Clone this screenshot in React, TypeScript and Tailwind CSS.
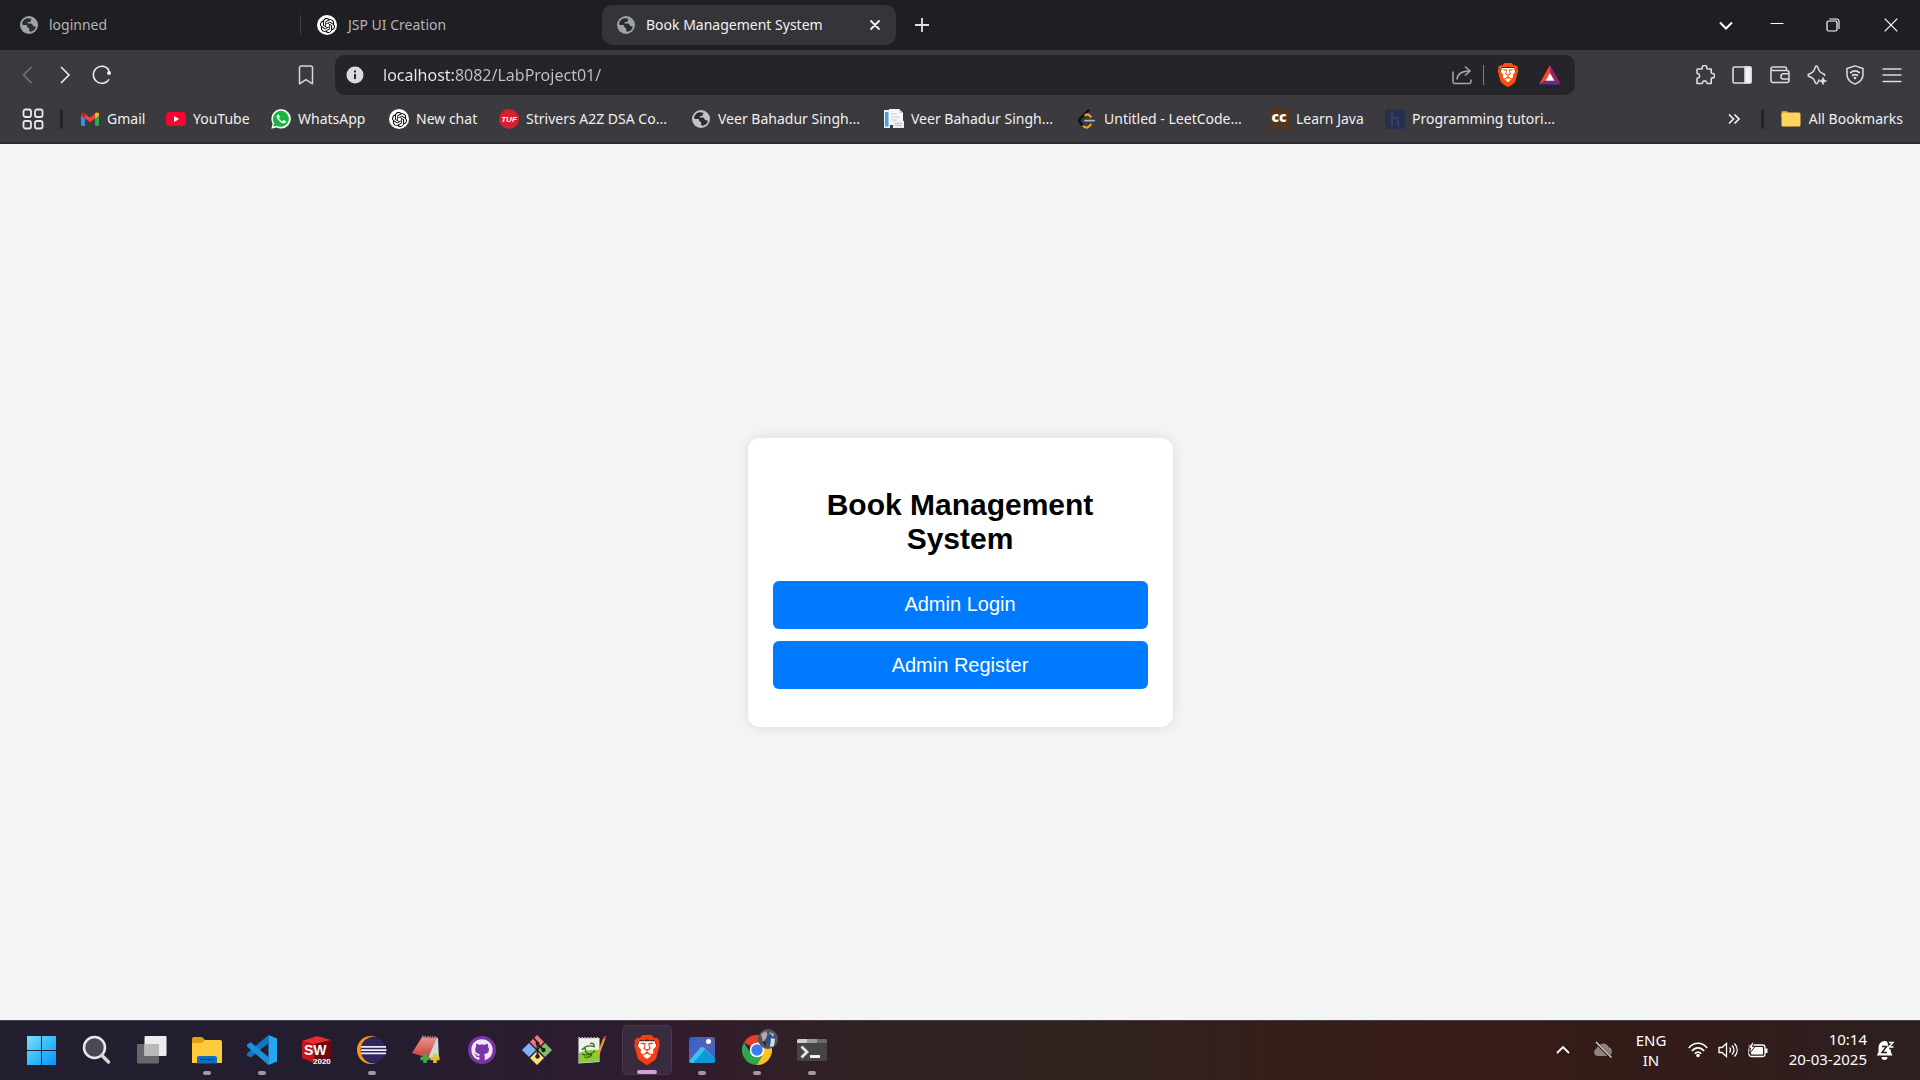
import React from "react";
import { SiOpenai, SiBrave } from "react-icons/si";
import { FaGithub } from "react-icons/fa6";

type IconProps = { className?: string };

const Globe = ({ className = "size-[18px] text-[#9da3a9]" }: IconProps) => (
  <svg viewBox="0 0 18 18" className={className} aria-hidden="true">
    <circle cx="9" cy="9" r="9" fill="currentColor" />
    <path
      d="M8.500 2.200C6.700 2 4 3 2.800 5.600c-.9 1.800-.9 3 .2 3.300l3.200.2c.8.1 1 .6 1 1.500 0 1 .5 1.200 1.500 1.300.6 0 .5.6.4 1.300-.1 1.300.5 2.600 1.700 2.500 1.900-.3 3.800-1.700 4.700-3.700.4-1.300-.2-1.700-1-1.700-1 0-1.500-.2-1.800-1.100-.3-1-1.100-1.600-2.200-1.600H8.300c-.9 0-1-.9-.4-1.300.5-.3 1.300-.3 1.900-.2.7.1.9-.5.7-1-.2-.6.3-1 .8-1.300.5-.4.3-.9-.3-1.100z"
      fill="#2b2b30"
    />
  </svg>
);

const OpenAi = () => (
  <span className="flex size-5 shrink-0 items-center justify-center rounded-full bg-white text-black">
    <SiOpenai className="size-[15px]" />
  </span>
);

const Lion = ({ className }: IconProps) => (
  <span className={className}>
    <svg viewBox="0 0 24 24" className="size-full" aria-hidden="true">
      <path d="M6 5h12l2 5-3 7-5 4-5-4-3-7z" fill="#fff" />
      <SiBrave size={24} />
    </svg>
  </span>
);

const Gmail = () => (
  <svg viewBox="0 0 20 20" className="size-5" aria-hidden="true">
    <path d="M1 5.500v10.500a1 1 0 0 0 1 1h3V9z" fill="#4285f4" />
    <path d="M19 5.500v10.500a1 1 0 0 1-1 1h-3V9z" fill="#34a853" />
    <path d="M5 9.500V4.700l5 3.800 5-3.800v4.800l-5 3.800z" fill="#ea4335" />
    <path d="M1 5.500C1 3.300 3.400 2.800 5 4.200v5.300L1 6.500z" fill="#c5221f" />
    <path d="M19 5.500c0-2.200-2.400-2.700-4-1.300v5.300l4-3z" fill="#fbbc04" />
  </svg>
);

const YouTube = () => (
  <svg viewBox="0 0 20 20" className="size-5" aria-hidden="true">
    <rect y="3" width="20" height="14" rx="3.500" fill="#ff0033" />
    <path d="M8 7l5.200 3L8 13z" fill="#fff" />
  </svg>
);

const WhatsApp = () => (
  <svg viewBox="0 0 20 20" className="size-5" aria-hidden="true">
    <path d="M.3 19.700l1.400-5A9.700 9.700 0 1 1 5.500 18.400z" fill="#fff" />
    <path d="M2.200 17.800l1-3.500a8 8 0 1 1 2.700 2.500z" fill="#15b83c" />
    <path
      d="M7.100 5.400c-.5 0-1.400.7-1.400 2 0 3 4.300 6.900 7 6.900 1.400 0 2.300-.9 2.300-1.900 0-.4-2.200-1.500-2.500-1.400-.5.200-.8 1.200-1.200 1.200-.8 0-3.300-2.200-3.300-3 0-.4.800-.8.8-1.300S7.900 5.400 7.500 5.400z"
      fill="#fff"
    />
  </svg>
);

const Tuf = () => (
  <svg viewBox="0 0 20 20" className="size-5" aria-hidden="true">
    <circle cx="10" cy="10" r="10" fill="#d4202f" />
    <text x="10" y="12.500" textAnchor="middle" className="fill-white font-['Liberation_Sans'] text-[8px] font-bold italic">
      TUF
    </text>
  </svg>
);

const Papers = () => (
  <svg viewBox="0 0 20 20" className="size-5" aria-hidden="true">
    <path d="M0 1h6v18H0z" fill="#eef1f4" />
    <path d="M1 3h3.500v14.500H1z" fill="#4f9fd6" />
    <path d="M5 0h10l4 4v12H5z" fill="#f6f7f8" />
    <path d="M15 0v4h4" fill="#cfd4d9" />
    <path d="M7 5h6M7 8h9M7 11h6" stroke="#c3cad3" />
    <path d="M9 12h11v7H9z" fill="#e9ecef" />
    <path d="M11 14.500h7M11 16.500h7" stroke="#bfc6ce" />
  </svg>
);

const LeetCode = () => (
  <svg viewBox="0 0 20 20" className="size-5" fill="none" strokeLinecap="round" strokeWidth="2.200" aria-hidden="true">
    <path d="M11.500 1.200L3.300 9.600c-1.400 1.500-1.400 2.600 0 4.100l3.200 3.700" stroke="#0b0b0b" />
    <path d="M6.500 17.200c1.800 1.700 4 1.600 5.600.1l1.600-1.700M8.500 6c1.400-1 2.800-.7 3.700.2l1.500 1.500" stroke="#f89f1b" />
    <path d="M8 11.700h9" stroke="#b3b3b3" strokeWidth="1.800" />
  </svg>
);

const CodeChef = () => (
  <span className="flex size-5 items-center justify-center bg-[#56351f] pb-1 font-['Open_Sans',sans-serif] text-[14px] leading-4 font-extrabold text-white">
    cc
  </span>
);

const Hyper = () => (
  <svg viewBox="0 0 20 20" className="size-5" aria-hidden="true">
    <rect width="20" height="20" rx="1.500" fill="#283052" />
    <path d="M7 3v14M7 10.500c1-2.500 6-2.800 6 .8V17" fill="none" stroke="#3a4060" strokeWidth="2.200" />
  </svg>
);

type Bookmark = { label: string; icon: React.ReactNode; width: string };

const bookmarks: Bookmark[] = [
  { label: "Gmail", icon: <Gmail />, width: "w-[86px]" },
  { label: "YouTube", icon: <YouTube />, width: "w-[105px]" },
  { label: "WhatsApp", icon: <WhatsApp />, width: "w-[118px]" },
  { label: "New chat", icon: <OpenAi />, width: "w-[110px]" },
  { label: "Strivers A2Z DSA Co...", icon: <Tuf />, width: "w-[192px]" },
  { label: "Veer Bahadur Singh...", icon: <Globe className="mx-px size-[18px] text-[#bfc4c8]" />, width: "w-[193px]" },
  { label: "Veer Bahadur Singh...", icon: <Papers />, width: "w-[193px]" },
  { label: "Untitled - LeetCode...", icon: <LeetCode />, width: "w-[192px]" },
  { label: "Learn Java", icon: <CodeChef />, width: "w-[116px]" },
  { label: "Programming tutori...", icon: <Hyper />, width: "w-[180px]" },
];

function TabStrip() {
  return (
    <header className="flex h-[50px] items-center bg-[#1f1e23] pr-[22px] text-[14px] text-[#b4b4b7]">
      <div role="tablist" aria-label="Open tabs" className="flex items-center">
        <button role="tab" aria-selected="false" className="flex h-10 w-[300px] items-center gap-[11px] pl-5">
          <Globe />
          <span className="pb-[2px]">loginned</span>
        </button>
        <span className="h-5 w-px bg-[#3f3e44]" />
        <button role="tab" aria-selected="false" className="flex h-10 w-[301px] items-center gap-[11px] pl-4">
          <OpenAi />
          <span className="pb-[2px]">JSP UI Creation</span>
        </button>
        <div className="flex h-10 w-[294px] items-center rounded-[10px] bg-[#353439] pr-[13px] pl-[15px] text-[#f1f1f3]">
          <button role="tab" aria-selected="true" className="flex grow items-center gap-[11px]">
            <Globe />
            <span className="pb-[2px]">Book Management System</span>
          </button>
          <button aria-label="Close tab" className="p-[3px]">
            <svg viewBox="0 0 10 10" className="size-[10px]" stroke="#f4f4f6" strokeWidth="1.800" strokeLinecap="round">
              <path d="M1 1l8 8M9 1l-8 8" />
            </svg>
          </button>
        </div>
      </div>
      <button aria-label="New tab" className="ml-[19px]">
        <svg viewBox="0 0 14 14" className="size-[14px]" stroke="#e3e3e6" strokeWidth="1.800">
          <path d="M7 0v14M0 7h14" />
        </svg>
      </button>
      <div className="ml-auto flex items-center">
        <button aria-label="Search tabs" className="mr-[37px]">
          <svg viewBox="0 0 14 14" className="size-[14px]" fill="none" stroke="#fff" strokeWidth="2">
            <path d="M1 4.500l6 6 6-6" />
          </svg>
        </button>
        <button aria-label="Minimize" className="mr-[42px]">
          <svg viewBox="0 0 14 14" className="size-[14px]" stroke="#fff" strokeWidth="1">
            <path d="M.5 5.500h13" />
          </svg>
        </button>
        <button aria-label="Restore" className="mr-[44px]">
          <svg viewBox="0 0 14 14" className="size-[14px]" fill="none" stroke="#fff">
            <rect x="1" y="3" width="10" height="10" rx="1.500" strokeWidth="1.200" />
            <path d="M3.500 1h7A2.500 2.500 0 0 1 13 3.500V11" strokeWidth="1.100" />
          </svg>
        </button>
        <button aria-label="Close window">
          <svg viewBox="0 0 14 14" className="size-[14px]" stroke="#fff" strokeWidth="1.200">
            <path d="M.7.7l12.600 12.600M13.300.7L.7 13.300" />
          </svg>
        </button>
      </div>
    </header>
  );
}

function AddressBar() {
  return (
    <div className="flex h-[50px] items-center bg-[#3b3a3e]">
      <div className="flex w-[335px] items-center pl-[17px]">
        <button aria-label="Back">
          <svg viewBox="0 0 20 20" className="size-5" fill="none" stroke="#77767b" strokeWidth="1.500">
            <path d="M14.500 2L6.500 10l8 8" />
          </svg>
        </button>
        <button aria-label="Forward" className="ml-[18px]">
          <svg viewBox="0 0 20 20" className="size-5" fill="none" stroke="#ededf0" strokeWidth="1.600">
            <path d="M6 2l8 8-8 8" />
          </svg>
        </button>
        <button aria-label="Reload" className="ml-[17px]">
          <svg viewBox="0 0 20 20" className="size-5" fill="none" stroke="#ededf0" strokeWidth="1.500">
            <path d="M16.500 4.500a8.500 8.500 0 1 0 .6 9.800" />
            <circle cx="17" cy="8" r="2" fill="#ededf0" stroke="none" />
            <path d="M16 4l1.500 3" />
          </svg>
        </button>
        <button aria-label="Bookmark this page" className="ml-auto mr-[19px]">
          <svg viewBox="0 0 20 20" className="size-5" fill="none" stroke="#d8d8dc" strokeWidth="1.500">
            <path d="M3.500 18.800V2.800A1.800 1.800 0 0 1 5.300 1h9.400a1.800 1.800 0 0 1 1.800 1.800v16L10 14.600z" strokeLinejoin="round" />
          </svg>
        </button>
      </div>
      <div className="flex h-10 grow items-center rounded-[10px] bg-[#252429] pr-[13px] pl-[11px]">
        <button aria-label="Site information">
          <svg viewBox="0 0 18 18" className="size-[18px]">
            <circle cx="9" cy="9" r="8.500" fill="#dcdbe1" />
            <path d="M9 8v5M9 4.500v2" stroke="#2a292e" strokeWidth="2" />
          </svg>
        </button>
        <input
          aria-label="Address"
          defaultValue="localhost:8082/LabProject01/"
          className="ml-[19px] h-10 min-w-0 grow bg-[linear-gradient(90deg,#ececef_71px,#c2c2c6_71px)] bg-clip-text text-[16px] text-transparent outline-none"
        />
        <button aria-label="Share">
          <svg viewBox="0 0 20 20" className="size-5" fill="none" stroke="#a9a8ad" strokeWidth="1.500">
            <path d="M1 6.500v10.300A1.700 1.700 0 0 0 2.700 18.500h14.600a1.700 1.700 0 0 0 1.700-1.700V14.500" />
            <path d="M5 14.500c.3-5 4-8.500 13-8.500M13 1.500L18 6l-5 4.500" />
          </svg>
        </button>
        <span className="ml-[11px] h-5 w-px bg-[#7d7c82]" />
        <button aria-label="Brave Shields" className="ml-[12px]">
          <Lion className="block size-6 text-[#fb4f0a]" />
        </button>
        <button aria-label="Brave Rewards" className="ml-[18px]">
          <svg viewBox="0 0 24 24" className="size-6">
            <path d="M12 2L1 21.500l6.500-3.700L12 10z" fill="#ff4724" />
            <path d="M12 2l11 19.500-6.500-3.700L12 10z" fill="#9e1f63" />
            <path d="M1 21.500h22l-6.500-3.700h-9z" fill="#662d91" />
            <path d="M12 10l4.500 7.800h-9z" fill="#fff" />
          </svg>
        </button>
      </div>
      <div className="flex w-[345px] justify-end pr-[18px]">
        <div className="flex w-[207px] items-center justify-between text-[#dddce1]">
          <button aria-label="Extensions">
            <svg viewBox="0 0 20 20" className="size-5" fill="none" stroke="currentColor" strokeWidth="1.600" strokeLinejoin="round">
              <path d="M2.500 4h4.200c.6 0 .5-.6.5-1.200a2.300 2.300 0 0 1 4.600 0c0 .6 0 1.200.6 1.200h3.800v3.600c0 .8.5.9 1.200.9a2.200 2.200 0 0 1 0 4.400c-.7 0-1.200.1-1.200.9v4.700h-3.600c-.7 0-.7-.6-.8-1.100a2.200 2.200 0 0 0-4.200 0c-.1.500-.1 1.100-.8 1.100H2v-4.700c0-.7.500-.7 1.100-.8a2.200 2.200 0 0 0 0-4.200c-.6-.1-1.100-.2-1.100-.9V4.500z" />
            </svg>
          </button>
          <button aria-label="Sidebar">
            <svg viewBox="0 0 20 20" className="size-5" fill="none" stroke="currentColor" strokeWidth="1.600">
              <rect x="1" y="2" width="18" height="16" rx="1.500" />
              <path d="M13 2h5a1 1 0 0 1 1 1v14a1 1 0 0 1-1 1h-5z" fill="#f4f4f6" />
            </svg>
          </button>
          <button aria-label="Wallet">
            <svg viewBox="0 0 20 20" className="size-5" fill="none" stroke="currentColor" strokeWidth="1.500">
              <path d="M16.500 5.500V4A1.800 1.800 0 0 0 14.700 2H3a2 2 0 0 0-2 2v11.500a2 2 0 0 0 2 2h14a2 2 0 0 0 2-2V7.500a2 2 0 0 0-2-2H3a2 2 0 0 1-2-1.800" />
              <path d="M19 8.800h-5.500a2.600 2.600 0 0 0 0 5.200H19" />
            </svg>
          </button>
          <button aria-label="Leo AI">
            <svg viewBox="0 0 20 20" className="size-5" fill="none" stroke="currentColor" strokeWidth="1.500" strokeLinejoin="round">
              <path d="M12.500 14.500c-1 .5-1.300 2-1.900 3.400-.5 1-1.700 1-2.200 0C7 14.500 6.600 13 1.800 11.200c-1-.4-1-1.600 0-2C6.600 7.400 7 6 8.500 1.800c.4-1 1.600-1 2 0C12 6 12.500 7.400 17 9.200c1 .4.800 1.300.3 1.800" />
              <path d="M16 12.500l1 2.500 2.500 1-2.500 1-1 2.500-1-2.500-2.500-1 2.500-1z" fill="currentColor" strokeWidth=".8" />
            </svg>
          </button>
          <button aria-label="VPN">
            <svg viewBox="0 0 20 20" className="size-5" fill="none" stroke="currentColor" strokeWidth="1.500" strokeLinejoin="round">
              <path d="M10 .9l8 2.600v6c0 4.600-3 7.600-8 9.600-5-2-8-5-8-9.600v-6z" />
              <path d="M5.200 8c3-2.600 6.600-2.600 9.600 0M7 10.800c2-1.600 4-1.600 6 0" strokeWidth="1.800" />
              <circle cx="10" cy="13" r="1.300" fill="currentColor" stroke="none" />
            </svg>
          </button>
          <button aria-label="Menu">
            <svg viewBox="0 0 20 20" className="size-5" stroke="currentColor" strokeWidth="1.600">
              <path d="M.5 4h19M.5 10h19M.5 16.500h19" />
            </svg>
          </button>
        </div>
      </div>
    </div>
  );
}

function BookmarkBar() {
  return (
    <nav
      aria-label="Bookmarks"
      className="flex h-[44px] items-center border-b-2 border-[#2c2b31] bg-[#3b3a3e] pr-[17px] pb-1 pl-[22px] text-[14px] text-[#f0f0f2]"
    >
      <button aria-label="Apps">
        <svg viewBox="0 0 22 22" className="size-[22px]" fill="none" stroke="#e8e8eb" strokeWidth="1.800">
          <rect x="1.500" y="1.500" width="7.500" height="7.500" rx="2" />
          <rect x="13" y="1.500" width="7.500" height="7.500" rx="2" />
          <rect x="1.500" y="13" width="7.500" height="7.500" rx="2" />
          <rect x="13" y="13" width="7.500" height="7.500" rx="2" />
        </svg>
      </button>
      <span className="mr-[17px] ml-4 h-5 w-[3px] rounded bg-[#242328]" />
      {bookmarks.map((b, i) => (
        <a key={i} href="#" className={`flex shrink-0 items-center gap-[7px] whitespace-nowrap ${b.width}`}>
          {b.icon}
          <span className="pb-[2px]">{b.label}</span>
        </a>
      ))}
      <div className="ml-auto flex items-center">
        <button aria-label="More bookmarks">
          <svg viewBox="0 0 12 12" className="size-3" fill="none" stroke="#f0f0f2" strokeWidth="1.700">
            <path d="M1 1.500L5.500 6 1 10.500M6.500 1.500L11 6l-4.500 4.500" />
          </svg>
        </button>
        <span className="mr-[17px] ml-[21px] h-5 w-[3px] rounded bg-[#242328]" />
        <a href="#" className="flex items-center gap-2 whitespace-nowrap">
          <svg viewBox="0 0 20 20" className="size-5" aria-hidden="true">
            <path d="M.5 3a1 1 0 0 1 1-1H6l2 2.500v4H.5z" fill="#d99a1c" />
            <rect x=".5" y="3.500" width="19" height="14" rx="1.500" fill="#ffd45c" />
          </svg>
          <span className="pb-[2px]">All Bookmarks</span>
        </a>
      </div>
    </nav>
  );
}

const icon30 = "size-[30px]";

const WindowsLogo = () => (
  <svg viewBox="1 0 30 30" className={icon30}>
    <defs>
      <linearGradient id="win" x1="0" y1="0" x2="30" y2="30" gradientUnits="userSpaceOnUse">
        <stop offset="0" stopColor="#86dcfb" />
        <stop offset=".5" stopColor="#35bdfb" />
        <stop offset="1" stopColor="#0a90f8" />
      </linearGradient>
    </defs>
    <path d="M0 1h14v14H0zM15 1h14v14H15zM0 16h14v14H0zM15 16h14v14H15z" fill="url(#win)" className="translate-x-px" />
  </svg>
);

const Search = () => (
  <svg viewBox="0 0 30 30" className={icon30} fill="none">
    <circle cx="12.500" cy="12.500" r="10.500" fill="#4b4754" stroke="#e8e8ea" strokeWidth="2.500" />
    <path d="M20 20.500l6.500 6.500" stroke="#d5d5da" strokeWidth="3.500" strokeLinecap="round" />
  </svg>
);

const TaskView = () => (
  <svg viewBox="0 0 30 30" className={icon30}>
    <rect y="9" width="22" height="19.500" rx="1" fill="#686868" />
    <rect x="7.500" y="1" width="22" height="20" rx="1" fill="#ececec" />
    <path d="M7.500 9H22v12H7.500z" fill="#b9b9b9" />
  </svg>
);

const Explorer = () => (
  <svg viewBox="0 0 30 30" className={icon30}>
    <path d="M0 4a2 2 0 0 1 2-2h8l3 3v4H0z" fill="#e0a10c" />
    <path d="M0 8h10l3-3h15a2 2 0 0 1 2 2v21H0z" fill="#ffcb3c" />
    <path d="M5 28.500V23a2 2 0 0 1 2-2h16a2 2 0 0 1 2 2v5.500z" fill="#0f6fc4" />
    <path d="M8 24.500h14" stroke="#093f7a" strokeWidth="1.200" />
  </svg>
);

const VsCode = () => (
  <svg viewBox="0 0 30 30" className={icon30}>
    <path d="M21.500 8L3.700 22.500 0 20.500v-2.200L21.500 0z" fill="#0d79c4" />
    <path d="M0 9.500l3.700-2.300L21.500 22v8L0 11.500z" fill="#1b8fdc" />
    <path d="M21.500 0L30 3.500v23L21.500 30z" fill="#27a7f2" />
  </svg>
);

const SolidWorks = () => (
  <svg viewBox="0 0 30 30" className={icon30}>
    <path d="M0 6l12 3v19L0 23z" fill="#c8151c" />
    <path d="M12 9l17-4v19l-17 4z" fill="#6c0b10" />
    <path d="M0 6l15-5 14 4-17 4z" fill="#ea2a2e" />
    <text x="2" y="20" className="fill-white font-['Liberation_Sans'] text-[14px] leading-[14px] font-bold">SW</text>
    <text x="11" y="29" className="fill-white font-['Liberation_Sans'] text-[8px] leading-[8px] font-bold">2020</text>
  </svg>
);

const Eclipse = () => (
  <svg viewBox="0 0 30 30" className={icon30}>
    <circle cx="14" cy="15" r="14" fill="#f7941e" />
    <circle cx="17" cy="15" r="13.300" fill="#221e33" />
    <circle cx="16.500" cy="15" r="12.500" fill="#2f2560" />
    <path d="M4 11h25v1.800H4zM4 14.200h25.500v1.800H4zM4 17.500h25v1.800H4z" fill="#eeeef5" />
  </svg>
);

const NoteRed = () => (
  <svg viewBox="0 0 30 30" className={icon30}>
    <defs>
      <linearGradient id="note" x1="0" y1="0" x2="0" y2="1">
        <stop offset="0" stopColor="#ec918b" />
        <stop offset="1" stopColor="#c9403c" />
      </linearGradient>
    </defs>
    <path d="M23 2l3 1 1 22-11-2z" fill="#cfd9dd" />
    <path d="M10 2l15 1-9 20L0 18z" fill="url(#note)" />
    <path d="M10 1.500l15 1" stroke="#8b8b8b" strokeDasharray="1.500 1" strokeWidth="2" />
    <path d="M8.500 23.500h9M13 19v9" stroke="#3fae3f" strokeWidth="3.500" />
    <path d="M18.500 23.500h9M23 19v9" stroke="#e6c222" strokeWidth="3.500" />
  </svg>
);

const GitHubDesktop = () => (
  <span className="flex size-7 items-center justify-center rounded-full bg-[#7c33a6] text-[#efe8f5]">
    <FaGithub className="size-[22px]" />
  </span>
);

const GitBash = () => (
  <svg viewBox="0 0 30 30" className={icon30}>
    <path d="M15 0l7 7-7 7-7-7z" fill="#f07a7a" />
    <path d="M7 8l7 7-7 7-7-7z" fill="#7fb2f5" />
    <path d="M23 8l7 7-7 7-7-7z" fill="#80c261" />
    <path d="M15 16l7 7-7 7-7-7z" fill="#fbe07a" />
    <path d="M11.500 3l4 4.500v14M15.500 9l6 6" stroke="#241c2b" strokeWidth="1.800" fill="none" />
    <circle cx="15.500" cy="8.500" r="2" fill="#241c2b" />
    <circle cx="21.500" cy="15" r="2.200" fill="#241c2b" />
    <circle cx="15.500" cy="21.500" r="2.200" fill="#241c2b" />
  </svg>
);

const NotepadPlus = () => (
  <svg viewBox="0 0 30 30" className={icon30}>
    <path d="M1.500 3h21v24l-21 1.500z" fill="#eef3ea" />
    <path d="M2 18c6-3 13-4 20-3v11.500L2 28z" fill="#8ccb35" />
    <path d="M1.500 3h21" stroke="#b9b9b9" strokeWidth="2" strokeDasharray="1.500 1.500" />
    <path
      d="M5 15c3-4 8-5 13-3M5 19c4 2 9 0 13-3M8 13c0 4 3 7 7 7M13 9c2-2 5 0 4 3M7 22c3 1 6 0 8-2"
      stroke="#2d6a1e"
      strokeWidth="1.300"
      fill="none"
    />
    <path d="M27.500 3L21 20" stroke="#e3a22b" strokeWidth="2.200" />
    <path d="M28.500 1l-1.200 3" stroke="#c0392b" strokeWidth="2.200" />
  </svg>
);

const Photos = () => (
  <svg viewBox="0 0 30 30" className={icon30}>
    <defs>
      <linearGradient id="photo" x1="0" y1="0" x2="1" y2="1">
        <stop offset="0" stopColor="#2265c8" />
        <stop offset=".5" stopColor="#5a5fb8" />
        <stop offset="1" stopColor="#1f6fd2" />
      </linearGradient>
    </defs>
    <rect x="2" y="2" width="26" height="26" rx="3" fill="url(#photo)" />
    <path d="M2 26L13 13q2-2.200 4.500 0L28 24v1a3 3 0 0 1-3 3H5a3 3 0 0 1-3-2z" fill="#37c3f2" />
    <path d="M15 18l3-3.500L28 24v1a3 3 0 0 1-3 3H6z" fill="#1395dc" />
    <circle cx="21.500" cy="6.500" r="2.500" fill="#fff" />
  </svg>
);

const Chrome = () => (
  <span className="relative block">
    <svg viewBox="0 0 30 30" className={icon30}>
      <path d="M15 15L2 7.500A15 15 0 0 1 28 7.500z" fill="#e8402f" />
      <path d="M15 15l0 15A15 15 0 0 0 28 7.500H15z" fill="#fcc31e" />
      <path d="M2 7.500L9 19l11.500 1.500L15 30A15 15 0 0 1 2 7.500z" fill="#2da94f" />
      <circle cx="15" cy="15" r="7.300" fill="#fff" />
      <circle cx="15" cy="15" r="5.700" fill="#3a7df0" />
    </svg>
    <svg viewBox="0 0 20 20" className="absolute -top-[6px] -right-[6px] size-5">
      <circle cx="10" cy="10" r="10" fill="#4d5663" />
      <path d="M3 5l5-3 2 5-5 6z" fill="#b9a9a2" />
      <path d="M9 6l6 1-2 9-5-3z" fill="#24528f" />
      <path d="M13 9l4 1-1 7-4 1z" fill="#d6dce4" />
      <path d="M11 3l5 2-1 3z" fill="#a9b5c4" />
      <path d="M4 12l4 1v5z" fill="#2e2a30" />
    </svg>
  </span>
);

const Terminal = () => (
  <svg viewBox="0 0 30 30" className={icon30}>
    <rect y="4" width="30" height="22" rx="1.500" fill="#464446" />
    <path d="M1.500 4H10v4H0V5.500A1.500 1.500 0 0 1 1.500 4z" fill="#cfcccd" />
    <path d="M10 4h10v4H10z" fill="#9b999a" />
    <path d="M20 4h8.500A1.500 1.500 0 0 1 30 5.500V8H20z" fill="#6b696a" />
    <path d="M4.500 11.500l5.500 5.500-5.500 5.500" fill="none" stroke="#e6e6e6" strokeWidth="2.800" />
    <path d="M13 21.500h10" stroke="#fff" strokeWidth="2.800" />
  </svg>
);

type TaskbarApp = { name: string; icon: React.ReactNode; running?: boolean; active?: boolean };

const apps: TaskbarApp[] = [
  { name: "Start", icon: <WindowsLogo /> },
  { name: "Search", icon: <Search /> },
  { name: "Task view", icon: <TaskView /> },
  { name: "File Explorer", icon: <Explorer />, running: true },
  { name: "Visual Studio Code", icon: <VsCode />, running: true },
  { name: "SolidWorks", icon: <SolidWorks /> },
  { name: "Eclipse", icon: <Eclipse />, running: true },
  { name: "Notes", icon: <NoteRed /> },
  { name: "GitHub Desktop", icon: <GitHubDesktop /> },
  { name: "Git Bash", icon: <GitBash /> },
  { name: "Notepad++", icon: <NotepadPlus /> },
  { name: "Brave", icon: <Lion className="block size-[30px] text-[#fb3d14]" />, active: true },
  { name: "Photos", icon: <Photos />, running: true },
  { name: "Chrome", icon: <Chrome />, running: true },
  { name: "Terminal", icon: <Terminal />, running: true },
];

function Taskbar() {
  return (
    <footer className="flex h-[60px] items-center border-t border-[#45434a] bg-[linear-gradient(90deg,#221f2f_0%,#241d2f_18%,#2d1c2f_32%,#331d2b_38%,#2f2322_46%,#2f2320_55%,#3a1c16_76%,#331b18_85%,#2c1f20_100%)] pr-6 pb-[2px] pl-[17px] text-white">
      <div className="flex gap-[5px]">
        {apps.map((a) => (
          <button
            key={a.name}
            aria-label={a.name}
            className={`relative flex size-[50px] items-center justify-center rounded-[5px] ${
              a.active ? "border border-[#49374a] bg-[#3a2a3d]" : ""
            }`}
          >
            {a.icon}
            {a.running && <span className="absolute bottom-0 h-1 w-2 rounded-full bg-[#a09aa2]" />}
            {a.active && <span className="absolute bottom-0 h-1 w-5 rounded-full bg-[#d99ce4]" />}
          </button>
        ))}
      </div>
      <div className="ml-auto flex items-center text-[15px] leading-5">
        <button aria-label="Show hidden icons">
          <svg viewBox="0 0 14 10" className="h-[10px] w-[14px]" fill="none" stroke="#fff" strokeWidth="1.800">
            <path d="M1 8l6-6 6 6" />
          </svg>
        </button>
        <button aria-label="OneDrive" className="ml-[23px]">
          <svg viewBox="0 0 20 18" className="h-[18px] w-5">
            <path d="M4 15a4 4 0 0 1-.5-7.500A6.500 6.500 0 0 1 15.500 6 4.800 4.800 0 0 1 16 15z" fill="#8f8281" />
            <path d="M2.500 1l15 15" stroke="#331b18" strokeWidth="3" />
            <path d="M3 1l15.500 15.500" stroke="#e5dfdf" strokeWidth="1.300" />
          </svg>
        </button>
        <button aria-label="Input language" className="ml-[19px] w-[38px] text-center">
          ENG
          <br />
          IN
        </button>
        <button aria-label="Network, volume and battery" className="ml-[18px] flex items-center gap-[10px]">
          <svg viewBox="0 0 20 16" className="h-4 w-5" fill="none" stroke="#fff" strokeWidth="1.600">
            <path d="M.8 6C6-.3 14-.3 19.200 6M3.800 9c3.600-4.200 8.800-4.200 12.400 0M6.800 11.800c2-2.200 4.400-2.200 6.400 0" />
            <circle cx="10" cy="13.500" r="1.800" fill="#fff" stroke="none" />
          </svg>
          <svg viewBox="0 0 20 16" className="h-4 w-5" fill="none" stroke="#fff" strokeWidth="1.300">
            <path d="M1 5.500h3L8.500 1.500v13L4 10.500H1zM11.500 5.500c1.300 1.500 1.300 3.500 0 5M14 3.500c2.500 2.700 2.500 6.300 0 9M16.500 1.500c3.600 4 3.600 9 0 13" />
          </svg>
          <svg viewBox="0 0 20 16" className="h-4 w-5">
            <rect x="1" y="3" width="16" height="11.500" rx="2.500" fill="none" stroke="#fff" strokeWidth="1.300" />
            <rect x="3" y="5" width="12" height="7.500" rx="1" fill="#fff" />
            <path d="M18.300 6.500v4.500" stroke="#fff" strokeWidth="2.400" />
            <path d="M4.500 0L0 6h2.500L1.500 11.500 7 4.500H4.500L6 0z" fill="#fff" stroke="#301d1b" strokeWidth="1" />
          </svg>
        </button>
        <button aria-label="Clock" className="ml-5 w-[79px] pb-[2px] text-right whitespace-nowrap">
          10:14
          <br />
          20-03-2025
        </button>
        <button aria-label="Notifications" className="ml-[9px]">
          <svg viewBox="0 0 20 20" className="size-5">
            <path d="M8.500 1A6.300 6.300 0 0 0 2.500 7.500V12L.8 15.500h15.700L14.800 12V6L11 1.500z" fill="#fff" />
            <path d="M5.500 17a3 3 0 0 0 6 0z" fill="#fff" />
            <path d="M6 6.500h4.500l-4.500 6h5" fill="none" stroke="#2c1f20" strokeWidth="1.500" />
            <path d="M11 1h7.500v8.500h-5" fill="#2c1f20" />
            <path d="M13 2.500h4l-4 4.500h4.500" fill="none" stroke="#fff" strokeWidth="1.400" />
          </svg>
        </button>
      </div>
    </footer>
  );
}

export default function App() {
  return (
    <div className="flex min-h-screen flex-col bg-[#f4f4f4] font-['Noto_Sans','Open_Sans',sans-serif]">
      <TabStrip />
      <AddressBar />
      <BookmarkBar />
      <main className="flex grow items-center justify-center font-['Liberation_Sans',Arial,sans-serif]">
        <section className="w-[425px] rounded-[12px] bg-white px-[25px] pt-[50px] pb-[38px] text-center shadow-[0_0_12px_rgba(0,0,0,0.1)]">
          <h2 className="mb-[25px] text-[30px] leading-[34px] font-bold text-black">Book Management System</h2>
          <div className="flex flex-col gap-3 text-[20px] text-white">
            <button className="h-12 rounded-[6px] bg-[#007bff] pb-[2px]">Admin Login</button>
            <button className="h-12 rounded-[6px] bg-[#007bff]">Admin Register</button>
          </div>
        </section>
      </main>
      <Taskbar />
    </div>
  );
}
